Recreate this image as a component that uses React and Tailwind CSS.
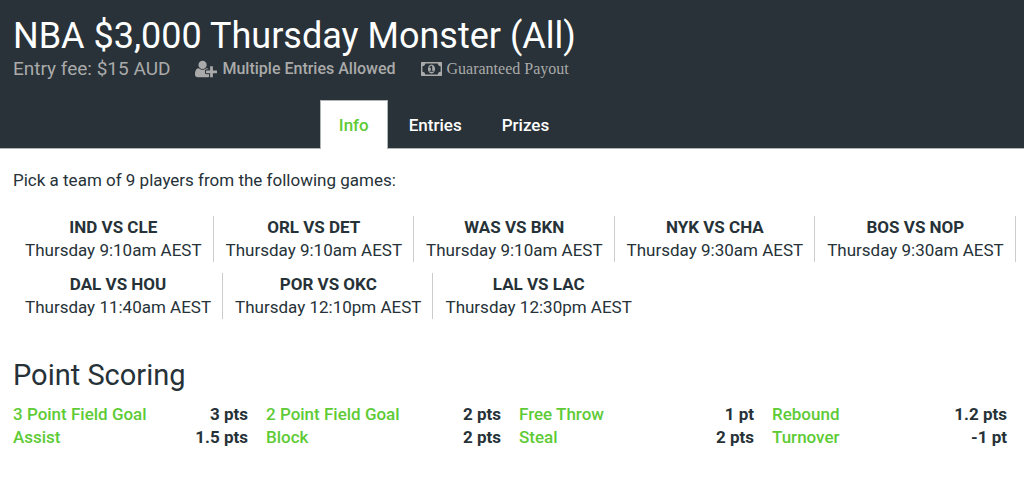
import React, { useState } from 'react';

const tabs = [
  { id: 'info', label: 'Info' },
  { id: 'entries', label: 'Entries' },
  { id: 'prizes', label: 'Prizes' },
];

const games = [
  { id: 1, teams: 'IND VS CLE', time: 'Thursday 9:10am AEST' },
  { id: 2, teams: 'ORL VS DET', time: 'Thursday 9:10am AEST' },
  { id: 3, teams: 'WAS VS BKN', time: 'Thursday 9:10am AEST' },
  { id: 4, teams: 'NYK VS CHA', time: 'Thursday 9:30am AEST' },
  { id: 5, teams: 'BOS VS NOP', time: 'Thursday 9:30am AEST' },
  { id: 6, teams: 'DAL VS HOU', time: 'Thursday 11:40am AEST' },
  { id: 7, teams: 'POR VS OKC', time: 'Thursday 12:10pm AEST' },
  { id: 8, teams: 'LAL VS LAC', time: 'Thursday 12:30pm AEST' },
];

const scoring = [
  { label: '3 Point Field Goal', points: '3 pts' },
  { label: '2 Point Field Goal', points: '2 pts' },
  { label: 'Free Throw', points: '1 pt' },
  { label: 'Rebound', points: '1.2 pts' },
  { label: 'Assist', points: '1.5 pts' },
  { label: 'Block', points: '2 pts' },
  { label: 'Steal', points: '2 pts' },
  { label: 'Turnover', points: '-1 pt' },
];

const UserPlusIcon = () => (
  <svg className="w-[22px] h-5" viewBox="0 0 2048 1792" fill="currentColor" aria-hidden="true">
    <path d="M704 896q-159 0-271.500-112.500t-112.500-271.500 112.500-271.500 271.500-112.500 271.500 112.500 112.500 271.500-112.500 271.500-271.500 112.500zM1664 1024h352q13 0 22.500 9.500t9.500 22.500v192q0 13-9.500 22.500t-22.500 9.500h-352v352q0 13-9.500 22.500t-22.500 9.500h-192q-13 0-22.500-9.500t-9.500-22.500v-352h-352q-13 0-22.500-9.500t-9.500-22.500v-192q0-13 9.500-22.500t22.500-9.500h352v-352q0-13 9.500-22.500t22.500-9.500h192q13 0 22.500 9.500t9.500 22.500v352zM928 1248q0 52 38 90t90 38h256v238q-68 50-171 50h-874q-121 0-194-69t-73-190q0-53 3.500-103.500t14-109 26.500-108.500 43-97.500 62-81 85.500-53.500 111.500-20q19 0 39 17 79 61 154.500 91.500t164.500 30.500 164.500-30.500 154.500-91.500q20-17 39-17 132 0 217 96h-223q-52 0-90 38t-38 90v192z" />
  </svg>
);

const MoneyIcon = () => (
  <svg className="w-[21px] h-5" viewBox="0 0 1920 1792" fill="currentColor" aria-hidden="true">
    <path d="M768 1152h384v-96h-128v-448h-114l-148 137 77 80q42-37 55-57h2v288h-128v96zm512-256q0 70-21 142t-59.500 134-101.500 101-138 39-138-39-101.500-101-59.500-134-21-142 21-142 59.500-134 101.500-101 138-39 138 39 101.500 101 59.500 134 21 142zm512 256v-512q-106 0-181-75t-75-181h-1152q0 106-75 181t-181 75v512q106 0 181 75t75 181h1152q0-106 75-181t181-75zm128-832v1152q0 26-19 45t-45 19h-1792q-26 0-45-19t-19-45v-1152q0-26 19-45t45-19h1792q26 0 45 19t19 45z" />
  </svg>
);

const App = () => {
  const [activeTab, setActiveTab] = useState('info');

  return (
    <div className="min-h-screen bg-white text-[#263238] font-['Roboto',sans-serif] text-[17px] leading-[23px]">
      {/* Contest header */}
      <header className="bg-[#283238] pt-4 border-b border-[#b0b5b7]">
        <div className="px-[13px]">
          <h1 className="text-4xl leading-10 text-white">NBA $3,000 Thursday Monster (All)</h1>
          <div className="flex flex-wrap items-center gap-x-[25px] mt-px text-[#aaaaaa]">
            <span className="text-[19px] leading-6">Entry fee: $15 AUD</span>
            <span className="flex items-center gap-[5px] text-base leading-6 font-medium">
              <UserPlusIcon />
              Multiple Entries Allowed
            </span>
            <span className="flex items-center gap-[5px] text-base leading-6 font-['Liberation_Serif',serif]">
              <MoneyIcon />
              Guaranteed Payout
            </span>
          </div>
        </div>

        {/* Tab bar */}
        <div role="tablist" className="flex justify-center gap-[2px] mt-[19px] -mb-px pr-[136px]">
          {tabs.map((tab) => (
            <button
              key={tab.id}
              type="button"
              role="tab"
              aria-selected={activeTab === tab.id}
              onClick={() => setActiveTab(tab.id)}
              className={`h-[49px] px-[18px] border border-b-0 font-medium cursor-pointer ${
                activeTab === tab.id
                  ? 'bg-white border-[#b0b5b7] text-[#5ecb36]'
                  : 'border-transparent text-white'
              }`}
            >
              {tab.label}
            </button>
          ))}
        </div>
      </header>

      <main className="pt-5 pb-10">
        <p className="px-[13px]">Pick a team of 9 players from the following games:</p>

        {/* Games */}
        <ul className="flex flex-wrap gap-y-[11px] mt-6 pl-[13px]">
          {games.map((game, idx) => (
            <li
              key={game.id}
              className={`pl-3 pr-[11px] text-center border-[#cccccc] ${idx < games.length - 1 ? 'border-r' : ''}`}
            >
              <strong className="block font-bold">{game.teams}</strong>
              <span className="block">{game.time}</span>
            </li>
          ))}
        </ul>

        {/* Scoring */}
        <section className="pl-[13px] pr-[17px] mt-10">
          <h2 className="text-[29px] leading-8">Point Scoring</h2>
          <dl className="grid grid-cols-4 gap-x-[18px] mt-3">
            {scoring.map((item) => (
              <div key={item.label} className="flex justify-between">
                <dt className="font-medium text-[#5ecb36]">{item.label}</dt>
                <dd className="font-bold">{item.points}</dd>
              </div>
            ))}
          </dl>
        </section>
      </main>
    </div>
  );
};

export default App;
